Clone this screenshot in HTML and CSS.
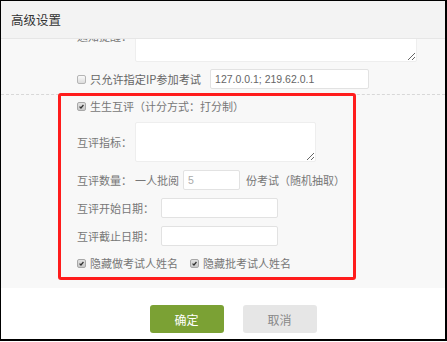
FILE: index.html
```html
<!DOCTYPE html>
<html lang="zh-CN">
<head>
    <meta charset="UTF-8">
    <title>高级设置</title>
    <link rel="stylesheet" href="styles.css">
</head>
<body>
    <div class="dialog">
        <div class="dlg-head">高级设置</div>

        <div class="dlg-body">
            <div class="body-inner">
                <div class="row row-notice">
                    <span class="lbl">通知提醒：</span>
                    <textarea class="ta ta-notice"></textarea>
                </div>

                <div class="row row-ip">
                    <span class="cb"></span>
                    <span class="cb-text">只允许指定IP参加考试</span>
                    <input type="text" class="ipt ipt-ip" value="127.0.0.1; 219.62.0.1">
                </div>

                <div class="sep"></div>

                <div class="mark">
                    <div class="row row-cb">
                        <span class="cb checked"><svg viewBox="0 0 9 9"><path d="M2 4.6 L3.8 6.4 L7 2.6" /></svg></span>
                        <span class="cb-text">生生互评（计分方式：打分制）</span>
                    </div>

                    <div class="row row-index">
                        <span class="lbl">互评指标：</span>
                        <textarea class="ta ta-index"></textarea>
                    </div>

                    <div class="row row-field">
                        <span class="lbl">互评数量：</span>
                        <span class="txt">一人批阅</span>
                        <input type="text" class="ipt ipt-num" value="5">
                        <span class="txt txt-after">份考试（随机抽取）</span>
                    </div>

                    <div class="row row-field">
                        <span class="lbl lbl-long">互评开始日期：</span>
                        <input type="text" class="ipt ipt-date">
                    </div>

                    <div class="row row-field">
                        <span class="lbl lbl-long">互评截止日期：</span>
                        <input type="text" class="ipt ipt-date">
                    </div>

                    <div class="row row-cb row-last">
                        <span class="cb checked"><svg viewBox="0 0 9 9"><path d="M2 4.6 L3.8 6.4 L7 2.6" /></svg></span>
                        <span class="cb-text">隐藏做考试人姓名</span>
                        <span class="cb checked cb-second"><svg viewBox="0 0 9 9"><path d="M2 4.6 L3.8 6.4 L7 2.6" /></svg></span>
                        <span class="cb-text">隐藏批考试人姓名</span>
                    </div>
                </div>
            </div>
        </div>

        <div class="dlg-foot">
            <button class="btn btn-ok">确定</button>
            <button class="btn btn-cancel">取消</button>
        </div>
    </div>
</body>
</html>
```

FILE: styles.css
```css
body {
    margin: 0;
    padding: 0;
    background-color: #fff;
    font-family: "Noto Sans CJK SC", "Noto Sans", sans-serif;
    font-size: 11px;
    color: #777;
}
.dialog {
    width: 447px;
    height: 341px;
    box-sizing: border-box;
    border: 1px solid #000;
    border-right-width: 2px;
    border-bottom-width: 2px;
    display: flex;
    flex-direction: column;
    background-color: #fff;
}
.dlg-head {
    height: 37px;
    flex: none;
    border-bottom: 1px solid #e6e6e6;
    background-color: #f3f3f3;
    padding-left: 10px;
    display: flex;
    align-items: center;
    font-size: 12.5px;
    color: #333;
}
.dlg-body {
    height: 249px;
    flex: none;
    overflow: hidden;
    background-color: #f8f8f8;
}
.body-inner {
    margin-top: -25px;
}
.row {
    display: flex;
    align-items: center;
    padding-left: 76px;
}
.lbl {
    width: 58px;
    flex: none;
    color: #777;
}
.lbl-long {
    width: 84px;
}
.ta {
    box-sizing: border-box;
    border: 1px solid #eee;
    border-radius: 2px;
    background-color: #fff;
    margin: 0;
    padding: 2px;
    font-family: inherit;
    outline: none;
}
.ta-notice {
    width: 282px;
    height: 48px;
}
.row-notice .lbl {
    align-self: flex-start;
    margin-top: 14px;
}
.row-ip {
    margin-top: 7px;
    height: 20px;
}
.cb {
    width: 9px;
    height: 9px;
    box-sizing: border-box;
    border: 1px solid #b5b5b5;
    border-radius: 2px;
    background: linear-gradient(#fafafa, #dcdcdc);
    flex: none;
    margin-right: 4px;
    display: flex;
}
.cb.checked {
    background: linear-gradient(#e2e2e2, #c8c8c8);
    border-color: #a8a8a8;
}
.cb svg {
    width: 100%;
    height: 100%;
}
.cb path {
    fill: none;
    stroke: #333;
    stroke-width: 1.6;
}
.cb-text {
    color: #777;
}
.row-ip .cb-text {
    color: #666;
    font-size: 11.2px;
}
.ipt {
    box-sizing: border-box;
    height: 20px;
    border: 1px solid #e2e2e2;
    border-radius: 2px;
    background-color: #fff;
    padding: 0 4px;
    margin: 0;
    font-family: "Liberation Sans", "Noto Sans CJK SC", sans-serif;
    font-size: 10.5px;
    color: #666;
    outline: none;
}
.ipt-ip {
    width: 159px;
    margin-left: 9px;
}
.sep {
    margin-top: 5px;
    border-top: 1px dashed #d8d8d8;
}
.mark {
    margin: -2px 0 0 57px;
    width: 298px;
    box-sizing: border-box;
    border: 3px solid #ff1c1c;
    border-radius: 3px;
    padding: 0 0 4px 0;
}
.mark .row {
    padding-left: 16px;
}
.row-cb {
    height: 20px;
}
.row-index {
    margin-top: 6px;
}
.ta-index {
    width: 181px;
    height: 40px;
}
.row-field {
    margin-top: 8px;
    height: 20px;
}
.ipt-num {
    width: 57px;
    margin-left: 4px;
    color: #aaa;
}
.txt-after {
    margin-left: 6px;
}
.ipt-date {
    width: 117px;
}
.row-last {
    margin-top: 7px;
}
.cb-second {
    margin-left: 12px;
}
.dlg-foot {
    flex: 1;
    display: flex;
    justify-content: center;
    gap: 19px;
    padding-top: 17px;
    box-sizing: border-box;
    padding-left: 20px;
}
.btn {
    width: 74px;
    height: 28px;
    border: none;
    border-radius: 3px;
    font-family: inherit;
    font-size: 12px;
    cursor: pointer;
}
.btn-ok {
    background-color: #7ba134;
    color: #fff;
}
.btn-cancel {
    background-color: #e6e6e6;
    color: #888;
}
```
